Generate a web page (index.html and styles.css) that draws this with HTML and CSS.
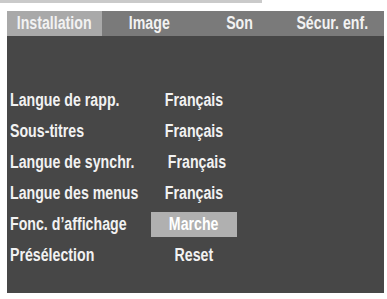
FILE: index.html
```html
<!DOCTYPE html>
<html lang="fr">
<head>
<meta charset="utf-8">
<title>Installation</title>
<link rel="stylesheet" href="styles.css">
</head>
<body>
<div class="strip"></div>
<div class="screen">
  <div class="tabs">
    <div class="tab tab-active tab-install"><span class="t">Installation</span></div>
    <div class="tab tab-image"><span class="t">Image</span></div>
    <div class="tab tab-son"><span class="t">Son</span></div>
    <div class="tab tab-secur"><span class="t">Sécur. enf.</span></div>
  </div>
  <div class="panel">
    <div class="menu">
      <div class="label"><span class="t">Langue de rapp.</span></div><div class="value"><span class="t">Français</span></div>
      <div class="label"><span class="t">Sous-titres</span></div><div class="value"><span class="t">Français</span></div>
      <div class="label"><span class="t">Langue de synchr.</span></div><div class="value value-shift"><span class="t">Français</span></div>
      <div class="label"><span class="t">Langue des menus</span></div><div class="value"><span class="t">Français</span></div>
      <div class="label"><span class="t">Fonc. d’affichage</span></div><div class="value value-selected"><span class="t">Marche</span></div>
      <div class="label"><span class="t">Présélection</span></div><div class="value"><span class="t">Reset</span></div>
    </div>
  </div>
</div>
</body>
</html>
```
FILE: styles.css
```css
html, body {
  margin: 0;
  padding: 0;
  background: #ffffff;
}
body {
  width: 387px;
  height: 299px;
  overflow: hidden;
  font-family: "Liberation Sans", Arial, sans-serif;
  font-weight: bold;
  font-size: 17.5px;
  color: #f2f2f2;
}
.t {
  display: inline-block;
  transform: scaleX(0.81);
  transform-origin: center;
  white-space: nowrap;
}
.strip {
  width: 262px;
  height: 3px;
  background: #cacaca;
}
.screen {
  margin: 8px 0 0 7px;
  width: 377px;
}
.tabs {
  display: flex;
  height: 25px;
  background: #7a7a7a;
}
.tab {
  line-height: 25px;
  text-align: center;
  white-space: nowrap;
  display: flex;
  justify-content: center;
}
.tab-active {
  background: #a9a9a9;
}
.tab-install { width: 95px; }
.tab-image { width: 94px; }
.tab-son { width: 88px; }
.tab-secur { width: 100px; padding-right: 3px; box-sizing: border-box; }
.panel {
  background: #474747;
  height: 257px;
  box-sizing: border-box;
  padding-top: 49px;
}
.menu {
  display: grid;
  grid-template-columns: 144px 86px;
  grid-auto-rows: 31px;
  align-items: center;
}
.label {
  padding-left: 3px;
  white-space: nowrap;
  line-height: 31px;
}
.label .t {
  transform-origin: left center;
}
.value {
  display: flex;
  justify-content: center;
  white-space: nowrap;
  line-height: 25px;
  height: 25px;
}
.value-shift {
  padding-left: 6px;
}
.value-selected {
  background: #b0b0b0;
  color: #ffffff;
}
```
